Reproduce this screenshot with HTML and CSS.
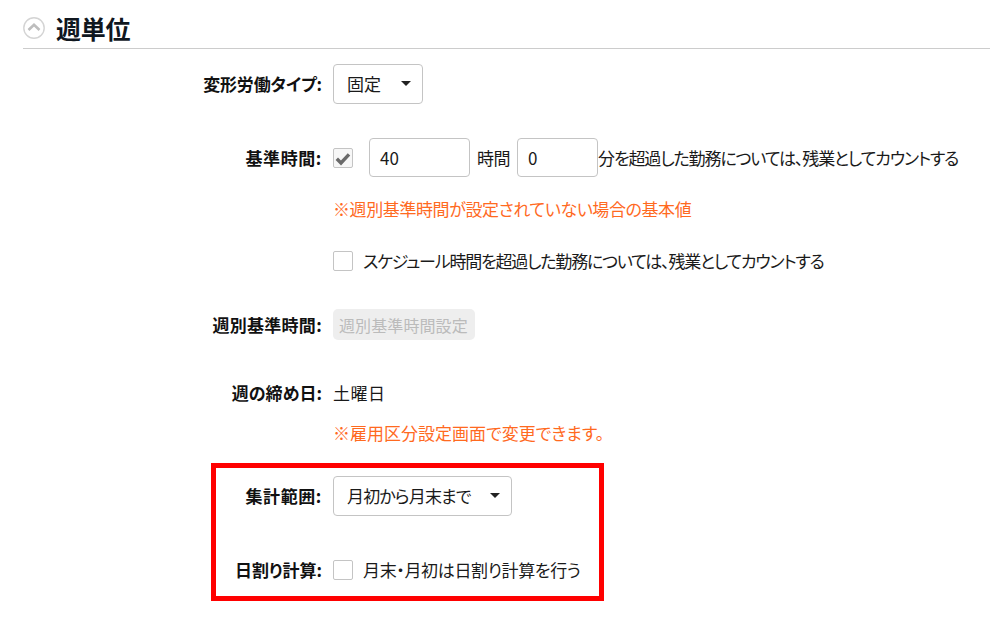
FILE: index.html
```html
<!DOCTYPE html>
<html lang="ja">
<head>
<meta charset="utf-8">
<title>週単位</title>
<link rel="stylesheet" href="styles.css">
</head>
<body>
<section class="page">
  <header class="heading">
    <svg class="toggle" width="22" height="22" viewBox="0 0 22 22" aria-hidden="true">
      <circle cx="11" cy="11" r="10.2" fill="#fff" stroke="#d4d4d4" stroke-width="1.4"/>
      <path d="M5.5 13 L11 7.8 L16.5 13" fill="none" stroke="#bdbdbd" stroke-width="2.6"/>
    </svg>
    <h2>週単位</h2>
  </header>

  <div class="row row-type">
    <div class="label label-tight">変形労働タイプ:</div>
    <div class="field"><div class="select select-type"><span>固定</span><i class="caret"></i></div></div>
  </div>

  <div class="row row-base">
    <div class="label label-wide">基準時間:</div>
    <div class="field">
      <span class="check check-on">
        <svg width="18" height="18" viewBox="0 0 18 18" aria-hidden="true"><path d="M2.8 9.8 L7 14 L15 5.4" fill="none" stroke="#6a6a6a" stroke-width="3.4"/></svg>
      </span>
      <div class="input input-hours">40</div>
      <span class="unit">時間</span>
      <div class="input input-mins">0</div>
      <span class="tail">分を超過した勤務については、残業としてカウントする</span>
    </div>
  </div>

  <div class="row row-note1">
    <div class="label"></div>
    <div class="field note note-base">※週別基準時間が設定されていない場合の基本値</div>
  </div>

  <div class="row row-sched">
    <div class="label"></div>
    <div class="field"><span class="check"></span><span class="check-text text-sched">スケジュール時間を超過した勤務については、残業としてカウントする</span></div>
  </div>

  <div class="row row-weekly">
    <div class="label label-wide-s">週別基準時間:</div>
    <div class="field"><div class="btn-disabled">週別基準時間設定</div></div>
  </div>

  <div class="row row-close">
    <div class="label">週の締め日:</div>
    <div class="field text-day">土曜日</div>
  </div>

  <div class="row row-note2">
    <div class="label"></div>
    <div class="field note">※雇用区分設定画面で変更できます。</div>
  </div>

  <div class="row row-range">
    <div class="label label-wide">集計範囲:</div>
    <div class="field"><div class="select select-range"><span class="text-range">月初から月末まで</span><i class="caret"></i></div></div>
  </div>

  <div class="row row-daily">
    <div class="label">日割り計算:</div>
    <div class="field"><span class="check"></span><span class="check-text text-daily">月末・月初は日割り計算を行う</span></div>
  </div>

  <div class="highlight"></div>
</section>
</body>
</html>
```

FILE: styles.css
```css
* { box-sizing: border-box; }
html, body { margin: 0; padding: 0; background: #fff; }
body {
  width: 990px;
  height: 628px;
  overflow: hidden;
  font-family: "Noto Sans CJK JP", "Noto Sans", sans-serif;
  font-size: 17px;
  line-height: 24px;
  color: #1a1a1a;
  font-feature-settings: "palt";
}
.page { position: relative; padding: 14px 0 0 23px; height: 628px; }
.heading {
  display: flex;
  align-items: center;
  height: 35px;
  border-bottom: 1px solid #ccc;
  padding-bottom: 6px;
}
.toggle { flex: none; }
.heading h2 {
  margin: 0 0 0 11px;
  font-size: 25px;
  letter-spacing: -0.3px;
  line-height: 30px;
  font-weight: 700;
  color: #10171f;
}
.row { display: flex; align-items: center; }
.label {
  flex: none;
  width: 299px;
  text-align: right;
  font-weight: 700;
  color: #111;
}
.label-wide { letter-spacing: 0.6px; }
.label-wide-s { letter-spacing: 0.3px; }
.label-tight { letter-spacing: -0.15px; }
.field { display: flex; align-items: center; margin-left: 11px; white-space: nowrap; }
.note { color: #ff6a1f; }
.note-base { letter-spacing: -0.4px; }
.text-day { letter-spacing: 0.5px; }
.select {
  display: flex;
  align-items: center;
  height: 40px;
  border: 1px solid #c4c4c4;
  border-radius: 4px;
  padding: 0 11px 0 13px;
  justify-content: space-between;
  background: #fff;
}
.select-type { width: 90px; }
.select-range { width: 179px; }
.text-range { letter-spacing: -0.85px; }
.caret {
  width: 0;
  height: 0;
  border-left: 5px solid transparent;
  border-right: 5px solid transparent;
  border-top: 5px solid #222;
  margin-top: -2px;
}
.check {
  flex: none;
  width: 20px;
  height: 20px;
  border: 1px solid #c4c4c4;
  border-radius: 2px;
  display: flex;
  align-items: center;
  justify-content: center;
  background: #fff;
}
.check-on { background: #f7f7f7; }
.check-text { margin-left: 10px; }
.text-sched { letter-spacing: -1.2px; }
.text-daily { letter-spacing: -0.35px; }
.tail { letter-spacing: -1.12px; }
.input {
  height: 39px;
  border: 1px solid #c4c4c4;
  border-radius: 4px;
  padding: 0 10px;
  display: flex;
  align-items: center;
}
.input-hours { width: 101px; margin-left: 16px; }
.input-mins { width: 81px; }
.unit { margin: 0 7px 0 7px; letter-spacing: -0.5px; }
.btn-disabled {
  height: 31px;
  width: 142px;
  padding: 0 6px;
  border-radius: 5px;
  background: #eee;
  color: #bbb;
  font-size: 16px;
  letter-spacing: 0.1px;
  display: flex;
  align-items: center;
}
.row-type { margin-top: 15px; }
.row-base { margin-top: 34px; }
.row-note1 { margin-top: 20px; }
.row-sched { margin-top: 28px; }
.row-weekly { margin-top: 36px; }
.row-close { margin-top: 41px; }
.row-note2 { margin-top: 16px; }
.row-range { margin-top: 31px; }
.row-daily { margin-top: 42px; }
.highlight {
  position: absolute;
  left: 211px;
  top: 463px;
  width: 393px;
  height: 138px;
  border: 5px solid #f00;
  pointer-events: none;
}
```
